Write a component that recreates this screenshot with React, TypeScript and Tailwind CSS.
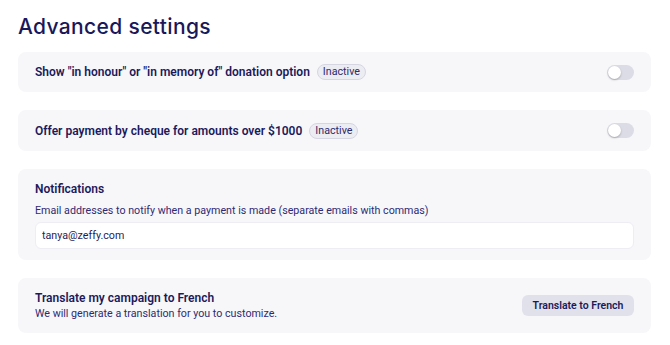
import { useState } from "react";

const TOGGLES = [
  { label: 'Show "in honour" or "in memory of" donation option', h: "h-[40px]" },
  { label: "Offer payment by cheque for amounts over $1000", h: "h-[41px]" },
];

function Toggle() {
  return (
    <div className="w-[27px] h-[15px] rounded-full bg-[#dcdce6] flex items-center px-[1px]">
      <div className="w-[13px] h-[13px] rounded-full bg-white shadow-[0_1px_2px_rgba(0,0,0,0.25)]" />
    </div>
  );
}

export default function App() {
  const [email, setEmail] = useState("tanya@zeffy.com");

  return (
    <div className="w-[670px] h-[345px] bg-white px-[18px] pt-[14px] font-['Roboto',sans-serif] text-[#1f1d5c]">
      <h1 className="font-['Inter',sans-serif] font-medium text-[21px] leading-[26px] text-[#19185a] tracking-[0.35px]">
        Advanced settings
      </h1>

      <div className="mt-[12px] w-[633px] flex flex-col gap-[18px]">
        {TOGGLES.map(({ label, h }) => (
          <div key={label} className={`${h} rounded-lg bg-[#f7f7fa] px-[17px] flex items-center justify-between`}>
            <div className="flex items-center gap-[7px]">
              <span className="text-[12px] font-semibold text-[#1c1a5a]">{label}</span>
              <span className="h-[16px] px-[5px] rounded-full bg-[#ececf3] border border-[#d6d6e2] text-[10.7px] leading-[14px] text-[#2c2a68]">
                Inactive
              </span>
            </div>
            <Toggle />
          </div>
        ))}

        <div className="h-[91px] rounded-lg bg-[#f7f7fa] px-[17px] pt-[12px]">
          <h3 className="text-[12px] font-semibold leading-[16px] text-[#1c1a5a]">Notifications</h3>
          <p className="mt-[7px] text-[10.7px] leading-[14px] text-[#2e2b72]">
            Email addresses to notify when a payment is made (separate emails with commas)
          </p>
          <input
            value={email}
            onChange={(e) => setEmail(e.target.value)}
            className="mt-[4px] w-full h-[27px] rounded-md bg-white border border-[#ededf3] px-[6px] text-[10.7px] text-[#1f1d5c] outline-none"
          />
        </div>

        <div className="h-[55px] rounded-lg bg-[#f7f7fa] px-[17px] flex items-center justify-between">
          <div>
            <h3 className="text-[12px] font-semibold leading-[16px] text-[#1c1a5a]">Translate my campaign to French</h3>
            <p className="mt-[1px] text-[10.7px] leading-[14px] text-[#2e2b72]">We will generate a translation for you to customize.</p>
          </div>
          <button className="h-[21px] w-[112px] rounded-md bg-[#e1e1ec] text-[10.5px] font-semibold text-[#1c1a5a]">
            Translate to French
          </button>
        </div>
      </div>
    </div>
  );
}
